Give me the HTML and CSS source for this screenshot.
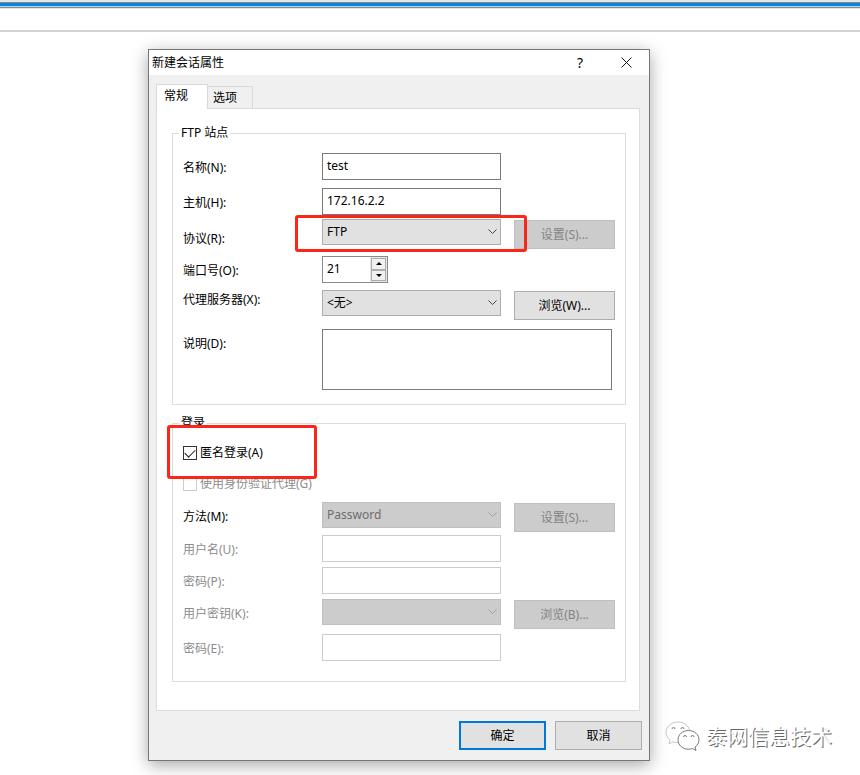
FILE: index.html
```html
<!DOCTYPE html>
<html lang="zh-CN">

<head>
    <meta charset="UTF-8">
    <meta name="viewport" content="width=device-width, initial-scale=1.0">
    <title>新建会话属性</title>
    <link rel="stylesheet" href="styles.css">
</head>

<body>
    <div class="topbar"></div>
    <div class="toolbar"></div>

    <main class="desktop">
        <form class="dialog">
            <header class="titlebar">
                <h1>新建会话属性</h1>
                <button type="button" class="title-btn" aria-label="帮助">?</button>
                <button type="button" class="title-btn" aria-label="关闭">
                    <svg width="11" height="11" viewBox="0 0 11 11">
                        <path d="M0.5 0.5L10.5 10.5M10.5 0.5L0.5 10.5" />
                    </svg>
                </button>
            </header>

            <div class="content">
                <nav class="tabs">
                    <button type="button" class="tab active">常规</button>
                    <button type="button" class="tab">选项</button>
                </nav>

                <div class="panel">
                    <!-- FTP 站点 -->
                    <fieldset class="group">
                        <legend>FTP 站点</legend>
                        <div class="rows site">
                            <label for="name">名称(N):</label>
                            <input class="field" type="text" id="name" value="test">

                            <label for="host">主机(H):</label>
                            <input class="field" type="text" id="host" value="172.16.2.2">

                            <label class="low" for="protocol">协议(R):</label>
                            <div class="select">
                                <select id="protocol">
                                    <option>FTP</option>
                                </select>
                                <svg width="9" height="6" viewBox="0 0 9 6"><path d="M0.5 0.5L4.5 4.5L8.5 0.5" /></svg>
                            </div>
                            <button type="button" class="btn" disabled>设置(S)...</button>

                            <label for="port">端口号(O):</label>
                            <div class="spinner">
                                <input type="text" id="port" value="21">
                                <div class="arrows">
                                    <button type="button" aria-label="增加"><i class="up"></i></button>
                                    <button type="button" aria-label="减少"><i class="down"></i></button>
                                </div>
                            </div>

                            <label class="high" for="proxy">代理服务器(X):</label>
                            <div class="select">
                                <select id="proxy">
                                    <option>&lt;无&gt;</option>
                                </select>
                                <svg width="9" height="6" viewBox="0 0 9 6"><path d="M0.5 0.5L4.5 4.5L8.5 0.5" /></svg>
                            </div>
                            <button type="button" class="btn">浏览(W)...</button>

                            <label for="desc">说明(D):</label>
                            <textarea id="desc"></textarea>
                        </div>
                        <span class="mark mark-protocol"></span>
                    </fieldset>

                    <!-- 登录 -->
                    <fieldset class="group login-group">
                        <legend>登录</legend>
                        <div class="checks">
                            <label class="check"><input type="checkbox" checked>匿名登录(A)</label>
                            <label class="check off"><input type="checkbox" disabled>使用身份验证代理(G)</label>
                        </div>
                        <div class="rows login">
                            <label for="method">方法(M):</label>
                            <div class="select">
                                <select id="method" disabled>
                                    <option>Password</option>
                                </select>
                                <svg width="9" height="6" viewBox="0 0 9 6"><path d="M0.5 0.5L4.5 4.5L8.5 0.5" /></svg>
                            </div>
                            <button type="button" class="btn" disabled>设置(S)...</button>

                            <label class="off" for="user">用户名(U):</label>
                            <input class="field" type="text" id="user" disabled>

                            <label class="off" for="pwd">密码(P):</label>
                            <input class="field" type="password" id="pwd" disabled>

                            <label class="off" for="key">用户密钥(K):</label>
                            <div class="select">
                                <select id="key" disabled>
                                    <option></option>
                                </select>
                                <svg width="9" height="6" viewBox="0 0 9 6"><path d="M0.5 0.5L4.5 4.5L8.5 0.5" /></svg>
                            </div>
                            <button type="button" class="btn" disabled>浏览(B)...</button>

                            <label class="off" for="keypwd">密码(E):</label>
                            <input class="field" type="password" id="keypwd" disabled>
                        </div>
                        <span class="mark mark-anonymous"></span>
                    </fieldset>
                </div>
            </div>

            <footer class="actions">
                <button type="button" class="btn primary">确定</button>
                <button type="button" class="btn">取消</button>
            </footer>
        </form>
    </main>

    <div class="watermark">
        <svg width="35" height="31" viewBox="0 0 35 31">
            <path class="faint" d="M13 21.5C10.800 21.800 9.500 21.300 8 20.800L4 23L5 19C2.500 17 1 14.500 1 11.500C1 5.500 6.500 1 13 1C19 1 23.500 4.500 24.500 9.500" />
            <path d="M23.500 9.500C29.500 9.500 34 13.700 34 18.700C34 21.700 32.500 24.200 30 26L31 29.500L27.500 27.500C26 28 25 28.200 23.500 28.200C17.500 28.200 13 24 13 18.700C13 13.700 17.500 9.500 23.500 9.500Z" />
            <path d="M7 8A1.500 1.500 0 0 1 10 8M16 8A1.500 1.500 0 0 1 19 8M18.500 16A1.500 1.500 0 0 1 21.500 16M26 16A1.500 1.500 0 0 1 29 16" />
        </svg>
        <span>泰网信息技术</span>
    </div>
</body>

</html>
```

FILE: styles.css
```css
* {
    box-sizing: border-box;
    margin: 0;
    padding: 0;
}

body {
    position: relative;
    min-height: 100vh;
    background-color: #fff;
    color: #000;
    font-family: "Noto Sans", "Noto Sans CJK SC", sans-serif;
    font-size: 12px;
    line-height: 20px;
}

button,
input,
select,
textarea {
    font: inherit;
    color: inherit;
    border-radius: 0;
}

.topbar {
    height: 9px;
    background: linear-gradient(#e6e6e6 2px, #8a8a8a 2px, #8a8a8a 3px, #0a84de 3px, #0a84de 6px, #b4d6ee 6px, #b4d6ee 7px, #84898d 7px, #84898d 8px, #e4e4e4 8px);
}

.toolbar {
    height: 23px;
    border-bottom: 2px solid #d2d2d2;
}

.desktop {
    padding: 17px 210px 14px 148px;
}

.dialog {
    border: 1px solid #777;
    background-color: #f0f0f0;
    box-shadow: 0 4px 16px rgba(0, 0, 0, 0.35);
}

.titlebar {
    display: flex;
    align-items: center;
    height: 25px;
    padding-left: 3px;
    background-color: #fff;
}

.titlebar h1 {
    flex: 1;
    font-size: 12px;
    font-weight: normal;
}

.title-btn {
    display: flex;
    align-items: center;
    justify-content: center;
    width: 46px;
    height: 25px;
    border: none;
    background: none;
    font-size: 14px;
}

.title-btn svg {
    fill: none;
    stroke: #111;
}

.content {
    padding: 9px 9px 0 7px;
}

.tabs {
    display: flex;
    align-items: flex-end;
}

.tab {
    height: 22px;
    padding: 0 15px 0 5px;
    border: 1px solid #d9d9d9;
    border-left: none;
    border-bottom: none;
    background-color: #f0f0f0;
}

.tab.active {
    position: relative;
    z-index: 1;
    height: 25px;
    margin-bottom: -1px;
    padding: 0 19px 3px 7px;
    border-left: 1px solid #d9d9d9;
    background-color: #fff;
}

.panel {
    padding: 14px 13px 28px 15px;
    border: 1px solid #dcdcdc;
    background-color: #fff;
}

/* 分组框 */
.group {
    position: relative;
    min-width: 0;
    padding: 10px 10px 14px;
    border: 1px solid #dcdcdc;
}

.group legend {
    margin-left: -4px;
    padding: 0 2px;
}

.login-group {
    margin-top: 8px;
    padding-bottom: 20px;
}

.rows {
    display: grid;
    grid-template-columns: 126px minmax(0, 1fr) 101px;
    column-gap: 13px;
    align-items: start;
}

.rows label {
    grid-column: 1;
    padding-top: 5px;
}

.rows label.low {
    padding-top: 10px;
}

.rows label.high {
    padding-top: 0;
}

.site {
    grid-template-rows: 35px 31px 37px 34px 39px auto;
}

.login {
    grid-template-rows: 33px 32px 32px 35px auto;
}

.off {
    color: #8c8c8c;
}

.field {
    width: 100%;
    height: 27px;
    padding: 0 4px 2px;
    border: 1px solid #7a7a7a;
    background-color: #fff;
}

.field:disabled {
    border-color: #ccc;
}

.select {
    position: relative;
}

.select select {
    display: block;
    width: 100%;
    height: 26px;
    padding: 0 20px 0 4px;
    border: 1px solid #adadad;
    background-color: #e1e1e1;
    appearance: none;
}

.select select:disabled {
    border-color: #bfbfbf;
    background-color: #ccc;
    color: #6d6d6d;
    opacity: 1;
}

.select svg {
    position: absolute;
    top: 10px;
    right: 4px;
    fill: none;
    stroke: #444;
    pointer-events: none;
}

.select select:disabled + svg {
    stroke: #a0a0a0;
}

.btn {
    height: 29px;
    border: 1px solid #adadad;
    background-color: #e1e1e1;
}

.btn:disabled {
    border-color: #bfbfbf;
    background-color: #ccc;
    color: #838383;
}

.rows .btn {
    margin-top: 1px;
}

.spinner {
    display: flex;
    width: 66px;
    height: 27px;
    border: 1px solid #8a8a8a;
}

.spinner input {
    flex: 1;
    min-width: 0;
    padding: 0 4px 2px;
    border: none;
}

.arrows {
    display: flex;
    flex-direction: column;
    width: 17px;
    padding: 1px;
    background-color: #e6e6e6;
}

.arrows button {
    display: flex;
    flex: 1;
    align-items: center;
    justify-content: center;
    border: 1px solid #adadad;
    background-color: #f0f0f0;
}

.arrows i {
    border: 3px solid transparent;
}

.arrows .up {
    border-top: none;
    border-bottom-color: #000;
}

.arrows .down {
    border-bottom: none;
    border-top-color: #000;
}

textarea {
    display: block;
    grid-column: 2 / 4;
    height: 61px;
    margin-right: 3px;
    padding: 2px 4px;
    border: 1px solid #7a7a7a;
    resize: none;
}

.checks {
    display: grid;
    gap: 11px;
    margin-bottom: 8px;
}

.check {
    display: flex;
    align-items: center;
    gap: 3px;
}

.check input {
    width: 14px;
    height: 14px;
    border: 1px solid #333;
    background-color: #fff;
    appearance: none;
}

.check input:checked::before {
    content: "";
    display: block;
    width: 9px;
    height: 5px;
    margin: 2px 0 0 1px;
    border: solid #222;
    border-width: 0 0 1px 1px;
    transform: rotate(-45deg);
}

.check input:disabled {
    border-color: #ccc;
}

/* 红色标注框 */
.mark {
    position: absolute;
    border: 3px solid #fb2618;
    border-radius: 3px;
    pointer-events: none;
}

.mark-protocol {
    top: 72px;
    right: 98px;
    left: 122px;
    height: 37px;
}

.mark-anonymous {
    top: -8px;
    left: -6px;
    width: 150px;
    height: 54px;
}

.actions {
    display: flex;
    justify-content: flex-end;
    gap: 9px;
    padding: 10px 7px;
}

.actions .btn {
    width: 87px;
}

.actions .primary {
    border: 2px solid #0078d7;
}

/* 公众号水印 */
.watermark {
    position: absolute;
    right: 28px;
    bottom: 23px;
    display: flex;
    align-items: center;
    gap: 6px;
    color: #fff;
    font-size: 21px;
    line-height: 32px;
    text-shadow: 1px 1px 0 #666;
}

.watermark svg {
    fill: none;
    stroke: #777;
}

.watermark .faint {
    stroke: #c4c4c4;
}
```
